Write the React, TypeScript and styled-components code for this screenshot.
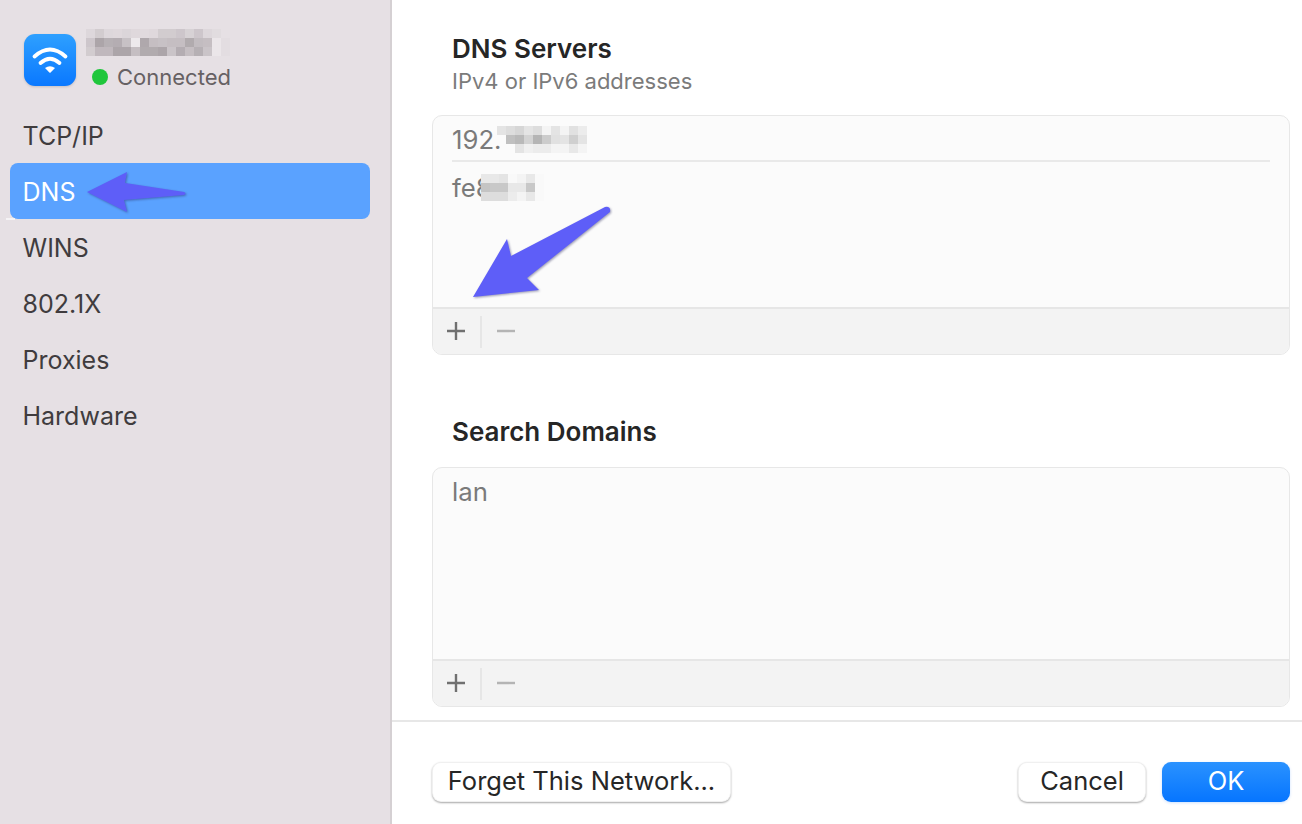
import React from 'react';
import styled, { createGlobalStyle } from 'styled-components';

const GlobalStyle = createGlobalStyle`
  html, body {
    margin: 0;
    padding: 0;
    background: #fff;
    overflow: hidden;
  }
  body {
    font-family: Inter, "Liberation Sans", sans-serif;
  }
`;

const Page = styled.div`
  position: relative;
  display: flex;
  width: 1302px;
  height: 824px;
  overflow: hidden;
`;

// Left column with the network name and the tabs.
const Sidebar = styled.aside`
  width: 392px;
  flex: none;
  box-sizing: border-box;
  padding: 24px 20px 0 10px;
  background: #e6e0e4;
  border-right: 2px solid #d5d0d3;
`;

const NetworkHeader = styled.div`
  display: flex;
  align-items: center;
  gap: 10px;
  height: 72px;
  padding-left: 14px;
`;

const NetworkText = styled.div`
  display: flex;
  flex-direction: column;
  gap: 9px;
  padding-bottom: 2px;
`;

const StatusLine = styled.div`
  display: flex;
  align-items: center;
  gap: 9px;
  padding-left: 6px;
  font-size: 22px;
  line-height: 24px;
  color: #666163;
`;

const StatusDot = styled.span`
  width: 16px;
  height: 16px;
  border-radius: 50%;
  background: #1fc63b;
`;

const TabList = styled.nav`
  display: flex;
  flex-direction: column;
  margin-top: 11px;
`;

const Tab = styled.div<{ $active?: boolean }>`
  height: 56px;
  box-sizing: border-box;
  display: flex;
  align-items: center;
  padding: 2px 0 0 12.5px;
  font-size: 25px;
  border-radius: 8px;
  color: ${(p) => (p.$active ? '#fff' : '#403c3e')};
  background: ${(p) => (p.$active ? '#5aa2ff' : 'transparent')};
`;

// Small white speck under the selected tab.
const Speck = styled.span`
  position: absolute;
  left: 6px;
  top: 218px;
  width: 9px;
  height: 2px;
  background: #f5f3f5;
`;

const Main = styled.main`
  flex: 1;
  display: flex;
  flex-direction: column;
  min-width: 0;
  padding-top: 33px;
`;

const Section = styled.section<{ $top?: number }>`
  margin: ${(p) => p.$top ?? 0}px 12px 0 40px;
`;

const SectionTitle = styled.h2`
  margin: 0 0 0 20px;
  font-size: 26px;
  line-height: 32px;
  font-weight: 600;
  color: #262626;
`;

const SectionHint = styled.p`
  margin: 0 0 0 20px;
  font-size: 22px;
  line-height: 32px;
  color: #7b7b7b;
`;

const ListBox = styled.div<{ $top: number }>`
  height: 240px;
  margin-top: ${(p) => p.$top}px;
  box-sizing: border-box;
  display: flex;
  flex-direction: column;
  border: 1px solid #e7e7e7;
  border-radius: 10px;
  background: #fbfbfb;
  overflow: hidden;
`;

const ListBody = styled.div`
  flex: 1;
  padding: 0 19px;
`;

const ListRow = styled.div<{ $ruled?: boolean; $pad?: number }>`
  height: ${(p) => (p.$ruled ? 46 : 48)}px;
  box-sizing: border-box;
  padding: ${(p) => p.$pad ?? 0}px 0 2px;
  display: flex;
  align-items: center;
  font-size: 25.7px;
  color: #7a7a7a;
  border-bottom: ${(p) => (p.$ruled ? '2px solid #e9e9e9' : 'none')};
`;

const ListFooter = styled.div`
  height: 47px;
  flex: none;
  box-sizing: border-box;
  display: flex;
  align-items: center;
  background: #f3f3f3;
  border-top: 2px solid #e6e6e6;
`;

const ToolButton = styled.span<{ $muted?: boolean; $width: number }>`
  width: ${(p) => p.$width}px;
  height: 32px;
  box-sizing: border-box;
  padding: 0 ${(p) => (p.$muted ? 0 : 1)}px 2px 0;
  display: flex;
  align-items: center;
  justify-content: center;
  color: ${(p) => (p.$muted ? '#b4b4b4' : '#707070')};
`;

const ToolDivider = styled.span`
  width: 2px;
  height: 32px;
  background: #e6e6e6;
`;

const Footer = styled.footer`
  height: 104px;
  margin-top: 13px;
  box-sizing: border-box;
  display: flex;
  align-items: flex-start;
  padding: 40px 12px 0 40px;
  border-top: 2px solid #e7e7e7;
`;

const Button = styled.button<{ $primary?: boolean; $width: number }>`
  width: ${(p) => p.$width}px;
  height: 40px;
  padding: 0 0 3px;
  font-family: inherit;
  font-size: 25.5px;
  border: none;
  border-radius: 9px;
  color: ${(p) => (p.$primary ? '#fff' : '#262626')};
  background: ${(p) => (p.$primary ? 'linear-gradient(#2a92ff, #0675ff)' : '#fff')};
  box-shadow: ${(p) =>
    p.$primary
      ? '0 1px 3px rgba(0, 110, 255, 0.2)'
      : 'inset 0 0 0 1px rgba(0, 0, 0, 0.06), 0 1px 2px rgba(0, 0, 0, 0.35)'};
`;

const Spacer = styled.div`
  flex: 1;
`;

const ButtonGap = styled.div`
  width: 16px;
`;

const Overlay = styled.svg`
  position: absolute;
  left: 0;
  top: 0;
  pointer-events: none;
  filter: drop-shadow(1px 1px 1px rgba(40, 40, 90, 0.45));
`;

const Smudge = styled.svg<{ $shift?: number }>`
  display: block;
  flex: none;
  margin-left: ${(p) => p.$shift ?? 0}px;
  filter: blur(0.7px);
`;

const WifiTile = styled.svg`
  flex: none;
  filter: drop-shadow(0 1px 1px rgba(0, 0, 0, 0.15));
`;

const TONES = {
  title: [
    [6, 14, 6, 5, 8, 5, 4, 5, 14, 14, 18, 10, 18, 6, 3, 0],
    [18, 42, 34, 36, 22, -30, 40, 24, 22, 24, 24, 38, 26, 24, -20, 2],
    [14, 28, 28, 42, 42, 24, 38, 38, 42, 20, 36, 24, 34, 20, -20, 2],
  ],
  ip: [
    [12, 16, 20, 12, 16, 4, 12, 4, 14, 8],
    [0, 32, 36, 22, 38, 26, 14, 12, 24, 12],
    [0, 0, 12, 6, 8, 8, 4, 4, 10, 4],
  ],
  ipv6: [
    [10, 10, 12, 1, 4, 10, 1],
    [30, 28, 28, 10, 10, 28, 1],
    [16, 16, 16, 8, 4, 10, 1],
  ],
};

// Pixelated block standing in for the redacted names and addresses.
const Redaction: React.FC<{ tones: number[][]; ink: string; base?: string; shift?: number }> = ({
  tones,
  ink,
  base,
  shift,
}) => (
  <Smudge $shift={shift} width={tones[0].length * 9} height={tones.length * 9}>
    {tones.map((row, y) =>
      row.map((v, x) => (
        <g key={`${x}-${y}`}>
          {base && v !== 0 && <rect x={x * 9} y={y * 9} width={9} height={9} fill={base} />}
          <rect
            x={x * 9}
            y={y * 9}
            width={9}
            height={9}
            fill={v < 0 ? '#fff' : ink}
            opacity={Math.abs(v) / 100}
          />
        </g>
      )),
    )}
  </Smudge>
);

const WifiIcon = () => (
  <WifiTile width="52" height="52" viewBox="0 0 52 52">
    <defs>
      <linearGradient id="tile" x1="0" y1="0" x2="0" y2="1">
        <stop offset="0" stopColor="#2ea0ff" />
        <stop offset="1" stopColor="#0a78ff" />
      </linearGradient>
    </defs>
    <rect width="52" height="52" rx="11" fill="url(#tile)" />
    <g fill="none" stroke="#fff" strokeWidth="3.8" strokeLinecap="round">
      <path d="M10.5 22.5 Q26 8.5 41.5 22.5" />
      <path d="M16.5 29 Q26 20.5 35.5 29" />
    </g>
    <path d="M21 34 Q26 30.5 31 34 L26.6 38.4 Q26 39 25.4 38.4 Z" fill="#fff" />
  </WifiTile>
);

const PlusIcon = () => (
  <svg width="20" height="20" viewBox="0 0 20 20">
    <path d="M1 10 H19 M10 1 V19" stroke="currentColor" strokeWidth="2.4" />
  </svg>
);

const MinusIcon = () => (
  <svg width="20" height="20" viewBox="0 0 20 20">
    <path d="M1 10 H19" stroke="currentColor" strokeWidth="2.4" />
  </svg>
);

const ListTools = () => (
  <ListFooter>
    <ToolButton $width={47}>
      <PlusIcon />
    </ToolButton>
    <ToolDivider />
    <ToolButton $muted $width={48}>
      <MinusIcon />
    </ToolButton>
  </ListFooter>
);

const TABS = ['TCP/IP', 'DNS', 'WINS', '802.1X', 'Proxies', 'Hardware'];

const App: React.FC = () => (
  <Page>
    <GlobalStyle />
    <Sidebar>
      <NetworkHeader>
        <WifiIcon />
        <NetworkText>
          <Redaction tones={TONES.title} ink="#5c5458" />
          <StatusLine>
            <StatusDot />
            Connected
          </StatusLine>
        </NetworkText>
      </NetworkHeader>
      <TabList>
        {TABS.map((tab) => (
          <Tab key={tab} $active={tab === 'DNS'}>
            {tab}
          </Tab>
        ))}
      </TabList>
    </Sidebar>
    <Main>
      <Section>
        <SectionTitle>DNS Servers</SectionTitle>
        <SectionHint>IPv4 or IPv6 addresses</SectionHint>
        <ListBox $top={18}>
          <ListBody>
            <ListRow $ruled $pad={4}>
              192.
              <Redaction tones={TONES.ip} ink="#444" base="#fbfbfb" shift={-4} />
            </ListRow>
            <ListRow $pad={4}>
              fe8
              <Redaction tones={TONES.ipv6} ink="#444" base="#fbfbfb" shift={-11} />
            </ListRow>
          </ListBody>
          <ListTools />
        </ListBox>
      </Section>
      <Section $top={61}>
        <SectionTitle>Search Domains</SectionTitle>
        <ListBox $top={19}>
          <ListBody>
            <ListRow>lan</ListRow>
          </ListBody>
          <ListTools />
        </ListBox>
      </Section>
      <Footer>
        <Button $width={299}>Forget This Network...</Button>
        <Spacer />
        <Button $width={128}>Cancel</Button>
        <ButtonGap />
        <Button $primary $width={128}>
          OK
        </Button>
      </Footer>
    </Main>
    <Speck />
    <Overlay width="1302" height="824" viewBox="0 0 1302 824">
      <path d="M87 192 L127 172 L125 183 L184 192 Q187 193.5 184 195 L124 200 L127 212 Z" fill="#5e5ef8" />
      <path d="M473 297 L507 239 L511 256 L605 207 Q611 206 610 212 L527 278 L539 290 Z" fill="#5e5ef8" />
    </Overlay>
  </Page>
);

export default App;
